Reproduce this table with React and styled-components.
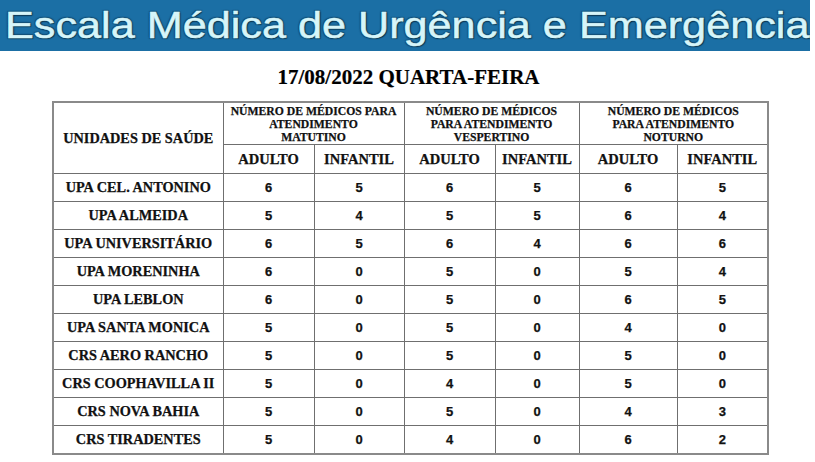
import React from "react";
import styled, { createGlobalStyle } from "styled-components";

const Global = createGlobalStyle`
  html, body { margin: 0; padding: 0; background: #ffffff; }
  body { width: 815px; height: 462px; overflow: hidden; }
`;

const Page = styled.div`
  width: 815px;
  height: 462px;
  display: flex;
  flex-direction: column;
  background: #fff;
`;

const Banner = styled.header`
  width: 810px;
  height: 51px;
  background: #1b6fa5;
  display: flex;
  align-items: center;
  overflow: hidden;
`;

const BannerText = styled.h1`
  margin: 0 0 0 5px;
  font-family: "Liberation Sans", Arial, sans-serif;
  font-weight: 400;
  font-size: 36px;
  line-height: 1;
  color: #d6f5f9;
  white-space: nowrap;
  transform: scaleX(1.2);
  transform-origin: left center;
  -webkit-text-stroke: 0.5px #d6f5f9;
  text-shadow: 1px 1px 1px #0b3550, -1px -1px 1px #134f77, 1px -1px 1px #134f77, -1px 1px 1px #134f77;
`;

const DateTitle = styled.h2`
  margin: 0;
  height: 50px;
  display: flex;
  align-items: center;
  justify-content: center;
  padding-top: 2px;
  padding-left: 2px;
  box-sizing: border-box;
  font-family: "Liberation Serif", "Times New Roman", serif;
  font-weight: 700;
  font-size: 21px;
  color: #000;
  -webkit-text-stroke: 0.2px #000;
`;

const TableWrap = styled.div`
  padding-left: 52px;
`;

const Table = styled.table`
  border-collapse: collapse;
  table-layout: fixed;
  width: 715px;
  border: 2px solid #8a8a8a;
  font-family: "Liberation Serif", "Times New Roman", serif;
  color: #111;
`;

const Cell = styled.td`
  border: 1px solid #6f6f6f;
  text-align: center;
  vertical-align: middle;
  padding: 0;
  height: ${(p) => p.$h || 27}px;
  font-weight: 700;
  white-space: nowrap;
  -webkit-text-stroke: 0.25px #111;
`;

const UnitHead = styled(Cell).attrs({ as: "th" })`
  font-size: 14.3px;
`;

const GroupHead = styled(Cell).attrs({ as: "th" })`
  font-size: 11.7px;
  line-height: 13px;
  padding-top: 1px;
`;

const SubHead = styled(Cell).attrs({ as: "th" })`
  font-size: 14.5px;
`;

const UnitName = styled(Cell)`
  font-size: 14.3px;
`;

const Num = styled(Cell)`
  font-family: "Liberation Sans", Arial, sans-serif;
  font-size: 13px;
  color: #111;
`;

const groups = [
  ["NÚMERO DE MÉDICOS PARA", "ATENDIMENTO", "MATUTINO"],
  ["NÚMERO DE MÉDICOS", "PARA ATENDIMENTO", "VESPERTINO"],
  ["NÚMERO DE MÉDICOS", "PARA ATENDIMENTO", "NOTURNO"],
];

const rows = [
  ["UPA CEL. ANTONINO", [6, 5, 6, 5, 6, 5]],
  ["UPA ALMEIDA", [5, 4, 5, 5, 6, 4]],
  ["UPA UNIVERSITÁRIO", [6, 5, 6, 4, 6, 6]],
  ["UPA MORENINHA", [6, 0, 5, 0, 5, 4]],
  ["UPA LEBLON", [6, 0, 5, 0, 6, 5]],
  ["UPA SANTA MONICA", [5, 0, 5, 0, 4, 0]],
  ["CRS AERO RANCHO", [5, 0, 5, 0, 5, 0]],
  ["CRS COOPHAVILLA II", [5, 0, 4, 0, 5, 0]],
  ["CRS NOVA BAHIA", [5, 0, 5, 0, 4, 3]],
  ["CRS TIRADENTES", [5, 0, 4, 0, 6, 2]],
];

const colWidths = [170, 91, 90, 91, 84, 98, 91];

export default function App() {
  return (
    <Page>
      <Global />
      <Banner>
        <BannerText>Escala Médica de Urgência e Emergência</BannerText>
      </Banner>
      <DateTitle>17/08/2022 QUARTA-FEIRA</DateTitle>
      <TableWrap>
        <Table>
          <colgroup>
            {colWidths.map((w, i) => (
              <col key={i} style={{ width: w }} />
            ))}
          </colgroup>
          <thead>
            <tr>
              <UnitHead rowSpan={2}>UNIDADES DE SAÚDE</UnitHead>
              {groups.map((g, i) => (
                <GroupHead key={i} colSpan={2} $h={40}>
                  {g[0]}
                  <br />
                  {g[1]}
                  <br />
                  {g[2]}
                </GroupHead>
              ))}
            </tr>
            <tr>
              {groups.map((g, i) => (
                <React.Fragment key={i}>
                  <SubHead $h={28}>ADULTO</SubHead>
                  <SubHead $h={28}>INFANTIL</SubHead>
                </React.Fragment>
              ))}
            </tr>
          </thead>
          <tbody>
            {rows.map(([name, vals]) => (
              <tr key={name}>
                <UnitName>{name}</UnitName>
                {vals.map((v, i) => (
                  <Num key={i}>{v}</Num>
                ))}
              </tr>
            ))}
          </tbody>
        </Table>
      </TableWrap>
    </Page>
  );
}
